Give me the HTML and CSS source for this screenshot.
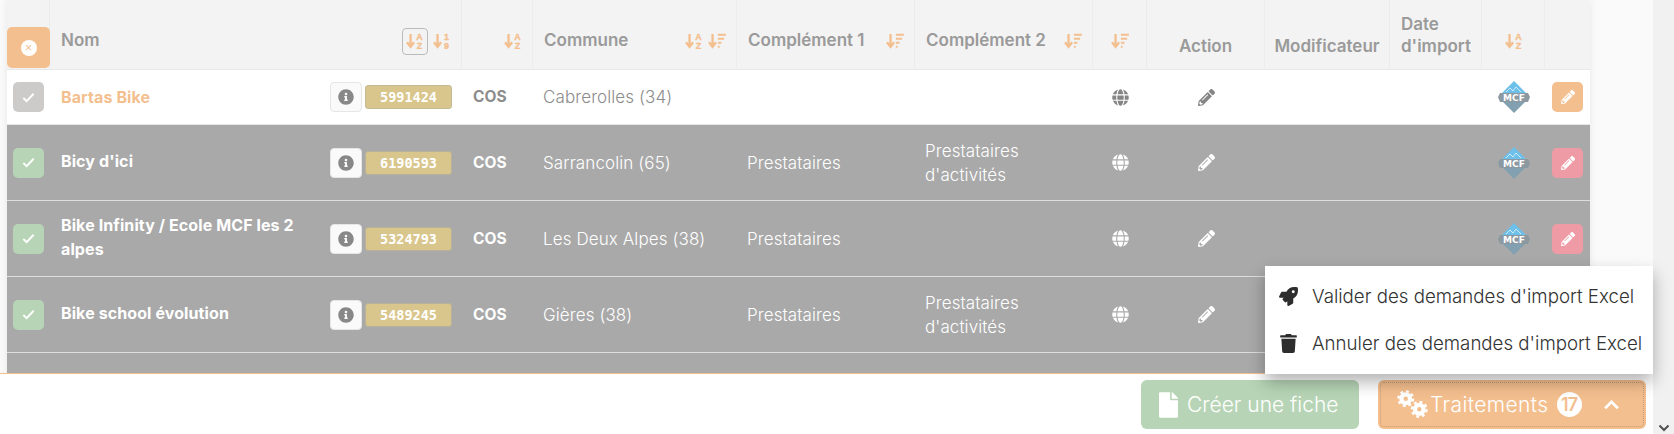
FILE: index.html
```html
<!DOCTYPE html>
<html lang="fr">
<head>
  <meta charset="UTF-8">
  <title>Fiches</title>
  <link rel="stylesheet" href="styles.css">
</head>
<body>
  <svg class="sprite" xmlns="http://www.w3.org/2000/svg">
    <symbol id="i-az" viewBox="0 0 20 18">
      <path d="M5 1v14M1 10.500l4 5 4-5" fill="none" stroke="currentColor" stroke-width="2.600"/>
      <text x="15" y="8" class="sort-letter">A</text>
      <text x="15" y="17.500" class="sort-letter">Z</text>
    </symbol>
    <symbol id="i-19" viewBox="0 0 20 18">
      <path d="M5 1v14M1 10.500l4 5 4-5" fill="none" stroke="currentColor" stroke-width="2.600"/>
      <text x="15" y="8" class="sort-letter">1</text>
      <text x="15" y="17.500" class="sort-letter">9</text>
    </symbol>
    <symbol id="i-amount" viewBox="0 0 20 18">
      <path d="M5 1v14M1 10.500l4 5 4-5" fill="none" stroke="currentColor" stroke-width="2.600"/>
      <path d="M11 2h9M11 6.500h7M11 11h4M11 15.500h2" fill="none" stroke="currentColor" stroke-width="2.200"/>
    </symbol>
    <symbol id="i-check" viewBox="0 0 16 16">
      <path d="M2.500 8.500l3.500 3.500 7.500-8" fill="none" stroke="currentColor" stroke-width="2"/>
    </symbol>
    <symbol id="i-info" viewBox="0 0 512 512">
      <path fill="currentColor" d="M256 8C119.043 8 8 119.083 8 256c0 136.997 111.043 248 248 248s248-111.003 248-248C504 119.083 392.957 8 256 8zm0 110c23.196 0 42 18.804 42 42s-18.804 42-42 42-42-18.804-42-42 18.804-42 42-42zm56 254c0 6.627-5.373 12-12 12h-88c-6.627 0-12-5.373-12-12v-24c0-6.627 5.373-12 12-12h12v-64h-12c-6.627 0-12-5.373-12-12v-24c0-6.627 5.373-12 12-12h64c6.627 0 12 5.373 12 12v100h12c6.627 0 12 5.373 12 12v24z"/>
    </symbol>
    <symbol id="i-globe" viewBox="0 0 496 512">
      <path fill="currentColor" d="M336.500 160C322 70.700 287.800 8 248 8s-74 62.700-88.500 152h177zM152 256c0 22.200 1.200 43.500 3.300 64h185.300c2.100-20.500 3.300-41.800 3.300-64s-1.200-43.500-3.300-64H155.300c-2.100 20.500-3.300 41.800-3.300 64zm324.700-96c-28.600-67.900-86.500-120.400-158-141.600 24.400 33.800 41.200 84.700 50 141.600h108zM177.200 18.400C105.800 39.600 47.800 92.100 19.300 160h108c8.700-56.900 25.500-107.800 49.900-141.600zM487.400 192H372.700c2.100 21 3.300 42.500 3.300 64s-1.200 43-3.300 64h114.600c5.500-20.500 8.600-41.800 8.600-64s-3.100-43.500-8.500-64zM120 256c0-21.500 1.200-43 3.300-64H8.600C3.200 212.500 0 233.800 0 256s3.200 43.500 8.600 64h114.600c-2-21-3.200-42.500-3.200-64zm39.500 96c14.500 89.300 48.700 152 88.500 152s74-62.700 88.500-152h-177zm159.300 141.600c71.400-21.200 129.400-73.700 158-141.600h-108c-8.800 56.900-25.600 107.800-50 141.600zM19.300 352c28.600 67.900 86.500 120.400 158 141.600-24.400-33.800-41.200-84.700-50-141.600h-108z"/>
    </symbol>
    <symbol id="i-pencil" viewBox="0 0 512 512">
      <path fill="currentColor" d="M497.900 142.100l-46.100 46.100c-4.700 4.700-12.300 4.700-17 0l-111-111c-4.700-4.700-4.700-12.300 0-17l46.100-46.100c18.700-18.700 49.100-18.700 67.900 0l60.100 60.100c18.800 18.700 18.800 49.100 0 67.900zM284.200 99.800L21.600 362.400.4 483.900c-2.900 16.400 11.400 30.600 27.800 27.800l121.500-21.300 262.600-262.600c4.700-4.700 4.700-12.300 0-17l-111-111c-4.800-4.700-12.400-4.700-17.100 0zM124.100 339.900c-5.500-5.500-5.500-14.300 0-19.800l154-154c5.500-5.500 14.300-5.500 19.800 0s5.500 14.300 0 19.800l-154 154c-5.500 5.500-14.300 5.500-19.800 0zM88 424h48v36.300l-64.500 11.300-31.100-31.100L51.700 376H88v48z"/>
    </symbol>
    <symbol id="i-rocket" viewBox="0 0 512 512">
      <path fill="currentColor" d="M505.120 19.090c-1.190-5.530-6.660-11-12.210-12.190C460.720 0 435.510 0 410.410 0 307.180 0 245.270 55.200 199.050 128H94.840c-16.350.02-35.560 11.880-42.890 26.480L2.520 253.300A28.400 28.400 0 0 0 0 264a24 24 0 0 0 24 24h103.810l-22.470 22.470c-11.370 11.360-13 32.260 0 45.250l50.900 50.900c11.160 11.190 32.160 13.160 45.280 0l22.480-22.470V488a24 24 0 0 0 24 24 28.560 28.560 0 0 0 10.710-2.520l98.730-49.390c14.630-7.300 26.510-26.500 26.510-42.860V312.800c72.600-46.310 128.030-108.410 128.030-211.100.01-25.200.01-50.400-6.950-82.610zM384.040 168a40 40 0 1 1 40.010-40 40.020 40.020 0 0 1-40.010 40z"/>
    </symbol>
    <symbol id="i-trash" viewBox="0 0 448 512">
      <path fill="currentColor" d="M432 32H312l-9.400-18.700A24 24 0 0 0 281.100 0H166.800a23.720 23.720 0 0 0-21.400 13.300L136 32H16A16 16 0 0 0 0 48v32a16 16 0 0 0 16 16h416a16 16 0 0 0 16-16V48a16 16 0 0 0-16-16zM53.200 467a48 48 0 0 0 47.900 45h245.800a48 48 0 0 0 47.900-45L416 128H32z"/>
    </symbol>
    <symbol id="i-file" viewBox="0 0 384 512">
      <path fill="currentColor" d="M224 136V0H24C10.700 0 0 10.700 0 24v464c0 13.300 10.700 24 24 24h336c13.300 0 24-10.700 24-24V160H248c-13.200 0-24-10.800-24-24zm160-14.100v6.100H256V0h6.100c6.400 0 12.500 2.500 17 7l97.900 98c4.500 4.500 7 10.600 7 16.900z"/>
    </symbol>
    <symbol id="i-cogs" viewBox="0 0 32 30">
      <g fill="none" stroke="currentColor">
        <circle cx="9" cy="9" r="4.500" stroke-width="4.400"/>
        <circle cx="9" cy="9" r="7.600" stroke-width="2.400" stroke-dasharray="3 2.970"/>
        <circle cx="23" cy="20" r="4.500" stroke-width="4.400"/>
        <circle cx="23" cy="20" r="7.600" stroke-width="2.400" stroke-dasharray="3 2.970"/>
      </g>
    </symbol>
    <symbol id="i-mcf" viewBox="0 0 34 32">
      <path d="M17 0L31 14H3z" fill="#6cc0ea"/>
      <path d="M3 18L17 32 31 18z" fill="#83a0b0"/>
      <path d="M9 11l4-4 3 3 3-4 5 5" fill="none" stroke="#cfe8f5" stroke-width="1"/>
      <path class="mcf-band" d="M3 12h28l2 4-2 5H3l-2-5z"/>
      <text x="17" y="20" class="mcf-text">MCF</text>
    </symbol>
  </svg>

  <div class="app">
    <div class="main">
      <div class="table-wrap">
        <table class="grid">
          <colgroup>
            <col class="c-check"><col class="c-nom"><col class="c-type"><col class="c-commune">
            <col class="c-comp1"><col class="c-comp2"><col class="c-web"><col class="c-action">
            <col class="c-modif"><col class="c-date"><col class="c-logo"><col class="c-edit">
          </colgroup>
          <thead>
            <tr>
              <th class="th-check"><button class="clear-btn"><span class="clear-dot">×</span></button></th>
              <th>
                <div class="th-sort">
                  <span class="th-label">Nom</span>
                  <span class="sort-group">
                    <span class="sort-active"><svg class="ico-sort"><use href="#i-az"/></svg></span>
                    <svg class="ico-sort"><use href="#i-19"/></svg>
                  </span>
                </div>
              </th>
              <th><div class="th-sort th-end"><svg class="ico-sort"><use href="#i-az"/></svg></div></th>
              <th>
                <div class="th-sort">
                  <span class="th-label">Commune</span>
                  <span class="sort-group">
                    <svg class="ico-sort"><use href="#i-az"/></svg>
                    <svg class="ico-sort"><use href="#i-amount"/></svg>
                  </span>
                </div>
              </th>
              <th><div class="th-sort"><span class="th-label">Complément 1</span><svg class="ico-sort"><use href="#i-amount"/></svg></div></th>
              <th><div class="th-sort"><span class="th-label">Complément 2</span><svg class="ico-sort"><use href="#i-amount"/></svg></div></th>
              <th><div class="th-sort th-center"><svg class="ico-sort"><use href="#i-amount"/></svg></div></th>
              <th class="th-plain th-mid">Action</th>
              <th class="th-plain th-mid">Modificateur</th>
              <th class="th-plain">Date d'import</th>
              <th><div class="th-sort th-center"><svg class="ico-sort"><use href="#i-az"/></svg></div></th>
              <th></th>
            </tr>
          </thead>
          <tbody>
            <tr class="row-current">
              <td class="td-check"><span class="check check-off"><svg class="ico-check"><use href="#i-check"/></svg></span></td>
              <td>
                <div class="name-cell">
                  <span class="name">Bartas Bike</span>
                  <span class="info-btn"><svg class="ico-info"><use href="#i-info"/></svg></span>
                  <span class="code">5991424</span>
                </div>
              </td>
              <td class="type">COS</td>
              <td>Cabrerolles (34)</td>
              <td></td>
              <td></td>
              <td class="td-center"><svg class="ico-globe"><use href="#i-globe"/></svg></td>
              <td class="td-center"><svg class="ico-pencil"><use href="#i-pencil"/></svg></td>
              <td></td>
              <td></td>
              <td class="td-center"><svg class="ico-mcf"><use href="#i-mcf"/></svg></td>
              <td class="td-center"><span class="edit-btn edit-orange"><svg class="ico-edit"><use href="#i-pencil"/></svg></span></td>
            </tr>
            <tr class="row-selected">
              <td class="td-check"><span class="check"><svg class="ico-check"><use href="#i-check"/></svg></span></td>
              <td>
                <div class="name-cell">
                  <span class="name">Bicy d'ici</span>
                  <span class="info-btn"><svg class="ico-info"><use href="#i-info"/></svg></span>
                  <span class="code">6190593</span>
                </div>
              </td>
              <td class="type">COS</td>
              <td>Sarrancolin (65)</td>
              <td>Prestataires</td>
              <td>Prestataires d'activités</td>
              <td class="td-center"><svg class="ico-globe"><use href="#i-globe"/></svg></td>
              <td class="td-center"><svg class="ico-pencil"><use href="#i-pencil"/></svg></td>
              <td></td>
              <td></td>
              <td class="td-center"><svg class="ico-mcf"><use href="#i-mcf"/></svg></td>
              <td class="td-center"><span class="edit-btn"><svg class="ico-edit"><use href="#i-pencil"/></svg></span></td>
            </tr>
            <tr class="row-selected">
              <td class="td-check"><span class="check"><svg class="ico-check"><use href="#i-check"/></svg></span></td>
              <td>
                <div class="name-cell">
                  <span class="name">Bike Infinity / Ecole MCF les 2 alpes</span>
                  <span class="info-btn"><svg class="ico-info"><use href="#i-info"/></svg></span>
                  <span class="code">5324793</span>
                </div>
              </td>
              <td class="type">COS</td>
              <td>Les Deux Alpes (38)</td>
              <td>Prestataires</td>
              <td></td>
              <td class="td-center"><svg class="ico-globe"><use href="#i-globe"/></svg></td>
              <td class="td-center"><svg class="ico-pencil"><use href="#i-pencil"/></svg></td>
              <td></td>
              <td></td>
              <td class="td-center"><svg class="ico-mcf"><use href="#i-mcf"/></svg></td>
              <td class="td-center"><span class="edit-btn"><svg class="ico-edit"><use href="#i-pencil"/></svg></span></td>
            </tr>
            <tr class="row-selected">
              <td class="td-check"><span class="check"><svg class="ico-check"><use href="#i-check"/></svg></span></td>
              <td>
                <div class="name-cell">
                  <span class="name">Bike school évolution</span>
                  <span class="info-btn"><svg class="ico-info"><use href="#i-info"/></svg></span>
                  <span class="code">5489245</span>
                </div>
              </td>
              <td class="type">COS</td>
              <td>Gières (38)</td>
              <td>Prestataires</td>
              <td>Prestataires d'activités</td>
              <td class="td-center"><svg class="ico-globe"><use href="#i-globe"/></svg></td>
              <td class="td-center"><svg class="ico-pencil"><use href="#i-pencil"/></svg></td>
              <td></td>
              <td></td>
              <td></td>
              <td></td>
            </tr>
            <tr class="row-selected"><td colspan="12"></td></tr>
          </tbody>
        </table>
      </div>

      <div class="footer">
        <button class="btn btn-green"><svg class="ico-file"><use href="#i-file"/></svg>Créer une fiche</button>
        <button class="btn btn-orange">
          <svg class="ico-cogs"><use href="#i-cogs"/></svg><span class="btn-text">Traitements</span>
          <span class="count">17</span>
          <svg class="ico-chevron" viewBox="0 0 16 10"><path d="M2 8.500l6-6 6 6" fill="none" stroke="currentColor" stroke-width="2.600"/></svg>
        </button>
      </div>

      <div class="menu">
        <div class="menu-item"><svg class="ico-menu"><use href="#i-rocket"/></svg>Valider des demandes d'import Excel</div>
        <div class="menu-item"><svg class="ico-menu"><use href="#i-trash"/></svg>Annuler des demandes d'import Excel</div>
      </div>
    </div>

    <div class="scrollbar">
      <svg class="ico-scroll" viewBox="0 0 12 8"><path d="M1.500 1.500L6 6l4.500-4.500" fill="none" stroke="#505050" stroke-width="2"/></svg>
    </div>
  </div>
</body>
</html>
```

FILE: styles.css
```css
* {
  box-sizing: border-box;
}
body {
  margin: 0;
  font-family: Inter, "Open Sans", sans-serif;
  color: #8c8c8c;
  background-color: #fff;
}
.sprite {
  display: none;
}
.app {
  display: flex;
  height: 434px;
  overflow: hidden;
}
.main {
  position: relative;
  flex: 1;
  min-width: 0;
}
.scrollbar {
  display: flex;
  flex-direction: column;
  justify-content: flex-end;
  align-items: center;
  width: 21px;
  padding-bottom: 2px;
  background-color: #f1f1f1;
}
.ico-scroll {
  width: 12px;
  height: 8px;
}

/* table */
.table-wrap {
  height: 373px;
  padding-left: 7px;
  overflow: hidden;
  background-color: #fafafa;
}
.grid {
  width: 1583px;
  table-layout: fixed;
  border-collapse: separate;
  border-spacing: 0;
  box-shadow: 0 0 8px rgba(0, 0, 0, 0.08);
}
.c-check { width: 43px; }
.c-nom { width: 412px; }
.c-type { width: 71px; }
.c-commune { width: 204px; }
.c-comp1 { width: 178px; }
.c-comp2 { width: 178px; }
.c-web { width: 54px; }
.c-action { width: 118px; }
.c-modif { width: 125px; }
.c-date { width: 92px; }
.c-logo { width: 63px; }
.c-edit { width: 45px; }

.grid th {
  height: 70px;
  padding: 0 10px 12px 11px;
  background-color: #f3f3f3;
  border-right: 1px solid #ececec;
  border-bottom: 1px solid #e8e8e8;
  color: #9a9a9a;
  font-size: 17px;
  font-weight: 600;
  line-height: 22px;
  text-align: left;
  vertical-align: bottom;
}
.grid .th-check {
  padding: 0 0 1px;
}
.grid th:last-child {
  border-right: none;
}
.grid .th-mid {
  padding-left: 0;
  padding-right: 0;
  text-align: center;
}
.th-sort {
  display: flex;
  justify-content: space-between;
  align-items: center;
  min-height: 30px;
  padding-bottom: 2px;
}
.th-label {
  margin-top: -3px;
}
.th-end {
  justify-content: flex-end;
}
.th-center {
  justify-content: center;
}
.sort-group {
  display: flex;
  align-items: center;
  gap: 5px;
}
.sort-active {
  display: flex;
  align-items: center;
  justify-content: center;
  width: 26px;
  height: 27px;
  border: 1px solid #bbb;
  border-radius: 4px;
}
.ico-sort {
  width: 18px;
  height: 16px;
  color: #f4bf8f;
}
.sort-letter {
  fill: currentColor;
  stroke: currentColor;
  stroke-width: 0.4px;
  font-family: "Liberation Sans", sans-serif;
  font-size: 10px;
  font-weight: 700;
  text-anchor: middle;
}
.clear-btn {
  display: flex;
  align-items: center;
  justify-content: center;
  width: 43px;
  height: 41px;
  padding: 0;
  border: none;
  border-radius: 5px;
  background-color: #f4bf8f;
}
.clear-dot {
  width: 16px;
  height: 16px;
  border-radius: 50%;
  background-color: #fff;
  color: #f4bf8f;
  font-size: 13px;
  line-height: 16px;
}

.grid td {
  height: 76px;
  padding: 0 10px;
  border-bottom: 1px solid #ddd;
  font-size: 17px;
  font-weight: 300;
  letter-spacing: 0.1px;
  line-height: 24px;
}
.grid .row-current td {
  height: 55px;
  background-color: #fff;
  border-bottom-color: #e6e6e6;
}
.row-selected td {
  background-color: #a9a9a9;
  color: #fff;
}
.grid .td-check {
  padding: 0 0 0 6px;
}
.grid .td-center {
  padding: 0;
  text-align: center;
}
.grid .type {
  padding-left: 11px;
  font-size: 15.500px;
  font-weight: 700;
}
.check {
  display: flex;
  align-items: center;
  justify-content: center;
  width: 31px;
  height: 30px;
  border-radius: 5px;
  background-color: #b7d5b6;
  color: #fff;
}
.check-off {
  background-color: #cccbc9;
}
.ico-check {
  width: 15px;
  height: 15px;
}
.name-cell {
  display: flex;
  align-items: center;
  gap: 3px;
  padding-left: 1px;
}
.name {
  flex: 1;
  margin-top: -3px;
  padding-right: 20px;
  font-size: 16px;
  font-weight: 700;
}
.row-current .name {
  margin-top: -1px;
  color: #f4bf8f;
}
.info-btn {
  display: flex;
  align-items: center;
  justify-content: center;
  width: 32px;
  height: 30px;
  border: 1px solid #e6e6e6;
  border-radius: 4px;
  background-color: #fafafa;
}
.ico-info {
  width: 16px;
  height: 16px;
  color: #888;
}
.code {
  width: 87px;
  height: 24px;
  border: 1px solid #c4bb96;
  border-radius: 3px;
  background-color: #d9c68d;
  color: #fff;
  font-family: "DejaVu Sans Mono", monospace;
  font-size: 13.500px;
  font-weight: 700;
  letter-spacing: 0;
  line-height: 22px;
  text-align: center;
}
.row-selected .code {
  border-color: #b9b29a;
}
.ico-globe,
.ico-pencil {
  display: block;
  width: 17px;
  height: 17px;
  margin: 0 auto;
  color: #858585;
}
.row-selected .ico-globe,
.row-selected .ico-pencil {
  color: #fff;
}
.ico-mcf {
  display: block;
  width: 34px;
  height: 32px;
  margin: 0 auto;
}
.mcf-band {
  fill: #8d99a1;
}
.row-selected .mcf-band {
  fill: #a2acb2;
}
.mcf-text {
  fill: #fff;
  font-family: "DejaVu Sans", sans-serif;
  font-size: 9px;
  font-weight: 700;
  text-anchor: middle;
}
.edit-btn {
  display: flex;
  align-items: center;
  justify-content: center;
  width: 31px;
  height: 30px;
  margin: 0 auto;
  border-radius: 5px;
  background-color: #ef9ba5;
  color: #fff;
}
.edit-orange {
  background-color: #f4bf8f;
}
.ico-edit {
  width: 14px;
  height: 14px;
}

/* footer */
.footer {
  display: flex;
  justify-content: flex-end;
  gap: 19px;
  height: 61px;
  padding: 6px 7px 0 0;
  border-top: 1px solid #f4bf8f;
  background-color: #fff;
}
.btn {
  display: flex;
  align-items: center;
  height: 49px;
  padding: 0;
  border: none;
  border-radius: 6px;
  color: #fff;
  font-family: inherit;
  font-size: 21px;
  font-weight: 300;
}
.btn-green {
  width: 218px;
  padding-left: 18px;
  background-color: #b7d5b6;
}
.btn-orange {
  width: 268px;
  padding-left: 19px;
  background-color: #f4bf8f;
  outline: 1px dotted #c59a70;
  outline-offset: -3px;
}
.btn-text {
  letter-spacing: 0.4px;
}
.ico-file {
  width: 19px;
  height: 26px;
  margin-right: 9px;
}
.ico-cogs {
  width: 31px;
  height: 29px;
  margin-right: 2px;
}
.count {
  width: 25px;
  height: 25px;
  margin-left: 8px;
  border-radius: 50%;
  background-color: #fff;
  color: #f4bf8f;
  font-size: 18px;
  font-weight: 600;
  letter-spacing: -1px;
  line-height: 25px;
  text-align: center;
}
.ico-chevron {
  width: 17px;
  height: 11px;
  margin-left: 21px;
}

/* dropdown over the table */
.menu {
  position: absolute;
  top: 266px;
  right: 0;
  display: flex;
  flex-direction: column;
  justify-content: center;
  gap: 17px;
  width: 388px;
  height: 108px;
  padding-left: 14px;
  background-color: #fff;
  box-shadow: 0 8px 16px rgba(0, 0, 0, 0.3);
}
.menu-item {
  display: flex;
  align-items: center;
  height: 30px;
  color: #333;
  font-size: 18.700px;
  font-weight: 300;
  white-space: nowrap;
}
.ico-menu {
  width: 19px;
  height: 19px;
  margin-right: 14px;
  color: #2d2d2d;
}
```
